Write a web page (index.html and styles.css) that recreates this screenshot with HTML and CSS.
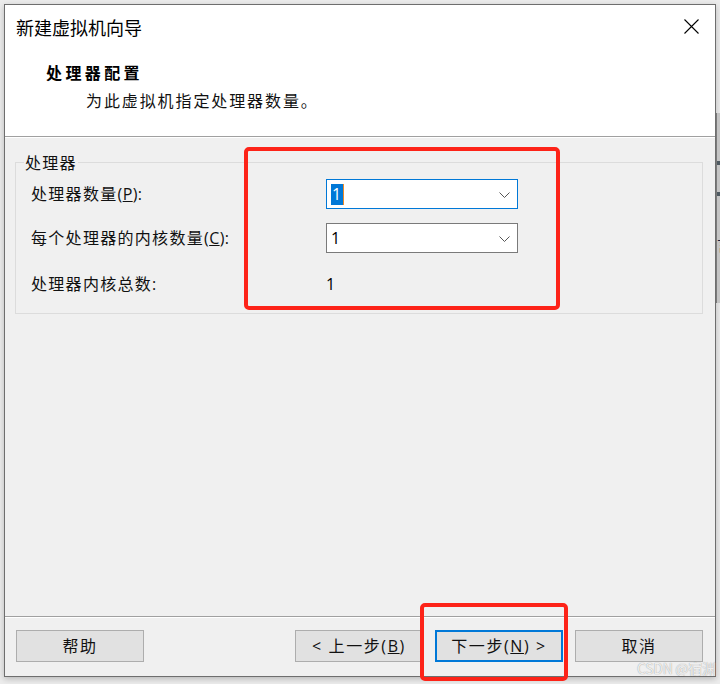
FILE: index.html
```html
<!DOCTYPE html>
<html lang="zh-CN">
<head>
<meta charset="utf-8">
<title>新建虚拟机向导</title>
<link rel="stylesheet" href="styles.css">
</head>
<body>
<div class="window">
  <div class="header">
    <div class="title-row">
      <div class="title">新建虚拟机向导</div>
      <svg class="close" width="15" height="15" viewBox="0 0 15 15"><path d="M0.5 0.5 L14.5 14.5 M14.5 0.5 L0.5 14.5" stroke="#000" stroke-width="1.1" fill="none"/></svg>
    </div>
    <div class="heading">处理器配置</div>
    <div class="sub">为此虚拟机指定处理器数量。</div>
  </div>
  <div class="content">
    <div class="group">
      <span class="legend">处理器</span>
      <div class="row">
        <div class="label">处理器数量<span class="lat">(<u>P</u>):</span></div>
        <div class="combo focused"><span class="val"><span class="sel">1</span></span><svg class="chev" width="11" height="6" viewBox="0 0 11 6"><path d="M0.5 0.5 L5.5 5.5 L10.5 0.5" stroke="#555" stroke-width="1" fill="none"/></svg></div>
      </div>
      <div class="row">
        <div class="label">每个处理器的内核数量<span class="lat">(<u>C</u>):</span></div>
        <div class="combo"><span class="val">1</span><svg class="chev" width="11" height="6" viewBox="0 0 11 6"><path d="M0.5 0.5 L5.5 5.5 L10.5 0.5" stroke="#555" stroke-width="1" fill="none"/></svg></div>
      </div>
      <div class="row total">
        <div class="label">处理器内核总数<span class="lat">:</span></div>
        <div class="plain">1</div>
      </div>
    </div>
  </div>
  <div class="footer">
    <button class="btn">帮助</button>
    <div class="spacer"></div>
    <button class="btn">&lt; 上一步(<u>B</u>)</button>
    <button class="btn default">下一步(<u>N</u>) &gt;</button>
    <button class="btn">取消</button>
  </div>
</div>
<div class="side-strip">
  <div class="bar bar1"></div>
  <div class="bar bar2"></div>
  <div class="glyph">言</div>
</div>
<div class="mark mark1"></div>
<div class="mark mark2"></div>
<div class="watermark">CSDN @宿渊</div>
</body>
</html>
```
FILE: styles.css
```css
html, body {
  margin: 0;
  padding: 0;
}
body {
  width: 720px;
  height: 684px;
  overflow: hidden;
  background: #ececec;
  font-family: "Open Sans", "Noto Sans CJK SC", sans-serif;
  color: #000;
  position: relative;
}
.window {
  position: relative;
  margin: 4px 0 0 4px;
  width: 712px;
  height: 673px;
  box-sizing: border-box;
  border: 1px solid #6e6e6e;
  background: #f0f0f0;
  display: flex;
  flex-direction: column;
  box-shadow: 0 2px 6px rgba(0,0,0,0.22);
}
.header {
  height: 131px;
  background: #fff;
  border-bottom: 1px solid #a0a0a0;
  flex: none;
}
.title-row {
  height: 46px;
  display: flex;
  align-items: center;
  justify-content: space-between;
  padding: 0 16px 0 11px;
}
.title {
  font-family: "Noto Sans CJK SC", sans-serif;
  font-size: 18px;
  line-height: 24px;
  margin-top: -3px;
}
.close {
  display: block;
  margin-top: -3px;
}
.heading {
  margin: 10px 0 0 41px;
  font-family: "Noto Sans CJK SC", sans-serif;
  font-weight: bold;
  font-size: 16px;
  letter-spacing: 3.4px;
  line-height: 22px;
}
.sub {
  margin: 6px 0 0 81px;
  font-family: "Noto Sans CJK SC", sans-serif;
  font-size: 16px;
  letter-spacing: 1.9px;
  line-height: 22px;
  color: #111;
}
.content {
  flex: 1;
  border-top: 1px solid #fff;
  padding: 24px 12px 0 10px;
}
.group {
  position: relative;
  border: 1px solid #dcdcdc;
  padding: 16px 0 14px 15px;
}
.legend {
  position: absolute;
  left: 8px;
  top: -12px;
  padding: 0 1px;
  background: #f0f0f0;
  font-family: "Noto Sans CJK SC", sans-serif;
  font-size: 16px;
  letter-spacing: 1.3px;
  line-height: 22px;
  color: #111;
}
.row {
  display: flex;
  align-items: center;
  height: 30px;
}
.row + .row {
  margin-top: 14px;
}
.row.total {
  margin-top: 16px;
}
.label {
  width: 295px;
  font-size: 16px;
  letter-spacing: 1.3px;
  line-height: 22px;
  color: #111;
}
.lat {
  letter-spacing: 0.4px;
}
.combo {
  width: 192px;
  height: 30px;
  box-sizing: border-box;
  border: 1px solid #7a7a7a;
  background: #fff;
  display: flex;
  align-items: center;
  justify-content: space-between;
  padding: 0 7px 0 4px;
}
.combo.focused {
  border-color: #0078d7;
}
.val {
  font-size: 16px;
  line-height: 21px;
}
.sel {
  display: inline-block;
  background: #0078d7;
  color: #fff;
  padding: 0 2px 0 1px;
  line-height: 21px;
  border-right: 1px solid #f08a24;
}
.chev {
  display: block;
  margin-top: 1px;
}
.plain {
  font-size: 16px;
  line-height: 22px;
}
.footer {
  flex: none;
  height: 46px;
  border-top: 1px solid #a0a0a0;
  box-shadow: inset 0 1px 0 #fff;
  padding: 13px 12px 0 11px;
  display: flex;
  gap: 12px;
}
.spacer {
  flex: 1;
}
.btn {
  width: 128px;
  height: 32px;
  box-sizing: border-box;
  margin: 0;
  border: 1px solid #adadad;
  background: #e1e1e1;
  font-family: "Open Sans", "Noto Sans CJK SC", sans-serif;
  font-size: 16px;
  letter-spacing: 1.6px;
  color: #111;
  padding: 0;
  line-height: 28px;
}
.btn.default {
  border: 2px solid #0078d7;
}
.side-strip {
  position: absolute;
  left: 716px;
  top: 113px;
  width: 4px;
  height: 190px;
  background: #c4c4c4;
  border-left: 1px solid #7a7a7a;
  overflow: hidden;
}
.bar {
  position: absolute;
  left: 0;
  width: 4px;
  height: 4px;
  background: #4f5a62;
}
.bar1 { top: 48px; }
.bar2 { top: 79px; }
.glyph {
  position: absolute;
  left: 0;
  top: 122px;
  font-family: "Noto Sans CJK SC", sans-serif;
  font-size: 16px;
  line-height: 18px;
  color: #1a2240;
}
.mark {
  position: absolute;
  border: 4px solid #fd2318;
  border-radius: 5px;
  box-sizing: border-box;
}
.mark1 {
  left: 244px;
  top: 147px;
  width: 316px;
  height: 163px;
}
.mark2 {
  left: 420px;
  top: 603px;
  width: 148px;
  height: 78px;
}
.watermark {
  position: absolute;
  left: 637px;
  top: 660px;
  font-family: "Noto Sans CJK SC", sans-serif;
  font-size: 14px;
  line-height: 17px;
  color: rgba(255,255,255,0.85);
  text-shadow: 0 0 1px rgba(0,0,0,0.45);
  letter-spacing: -0.3px;
}
```
